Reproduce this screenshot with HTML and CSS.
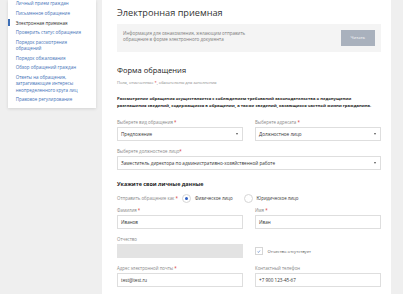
FILE: index.html
```html
<!DOCTYPE html>
<html lang="ru">
<head>
<meta charset="utf-8">
<title>Электронная приемная</title>
<link rel="stylesheet" href="styles.css">
</head>
<body>
<div class="page">
  <aside class="sidebar">
    <ul class="nav">
      <li class="nav-item"><a class="nav-link">Личный прием граждан</a></li>
      <li class="nav-item"><a class="nav-link">Письменное обращение</a></li>
      <li class="nav-item active"><a class="nav-link">Электронная приемная</a></li>
      <li class="nav-item"><a class="nav-link">Проверить статус обращения</a></li>
      <li class="nav-item"><a class="nav-link">Порядок рассмотрения<br>обращений</a></li>
      <li class="nav-item"><a class="nav-link">Порядок обжалования</a></li>
      <li class="nav-item"><a class="nav-link">Обзор обращений граждан</a></li>
      <li class="nav-item"><a class="nav-link">Ответы на обращения,<br>затрагивающие интересы<br>неопределенного круга лиц</a></li>
      <li class="nav-item"><a class="nav-link">Правовое регулирование</a></li>
    </ul>
  </aside>
  <main class="main">
    <h1 class="title">Электронная приемная</h1>
    <div class="info">
      <p class="info-text">Информация для ознакомления, желающим отправить<br>обращение в форме электронного документа</p>
      <button class="btn">Читать</button>
    </div>
    <h2 class="form-title">Форма обращения</h2>
    <p class="note">Поля, отмеченные <span class="req">*</span>, обязательны для заполнения</p>
    <p class="lead">Рассмотрение обращения осуществляется с соблюдением требований законодательства о недопущении<br>разглашения сведений, содержащихся в обращении, а также сведений, касающихся частной жизни гражданина.</p>

    <div class="grid">
      <div class="field">
        <div class="label">Выберете вид обращения <span class="req">*</span></div>
        <div class="control select">Предложение<span class="arrow"></span></div>
      </div>
      <div class="field">
        <div class="label">Выберете адресата <span class="req">*</span></div>
        <div class="control select">Должностное лицо<span class="arrow"></span></div>
      </div>
      <div class="field wide">
        <div class="label">Выберете должностное лицо<span class="req">*</span></div>
        <div class="control select">Заместитель директора по административно-хозяйственной работе<span class="arrow"></span></div>
      </div>
    </div>

    <h3 class="section">Укажите свои личные данные</h3>
    <div class="radio-row">
      <span class="label-inline">Отправить обращение как <span class="req">*</span></span>
      <span class="radio checked"></span><span class="radio-text">Физическое лицо</span>
      <span class="radio"></span><span class="radio-text">Юридическое лицо</span>
    </div>

    <div class="grid personal">
      <div class="field">
        <div class="label">Фамилия <span class="req">*</span></div>
        <div class="control">Иванов</div>
      </div>
      <div class="field">
        <div class="label">Имя <span class="req">*</span></div>
        <div class="control">Иван</div>
      </div>
      <div class="field">
        <div class="label">Отчество</div>
        <div class="control disabled"></div>
      </div>
      <div class="field check-field">
        <span class="checkbox"><svg viewBox="0 0 8 8" width="8" height="8"><path d="M2.3 4.2 L3.5 5.4 L5.8 2.6" fill="none" stroke="#3d6fc0" stroke-width="0.9"/></svg></span>
        <span class="check-text">Отчество отсутствует</span>
      </div>
      <div class="field">
        <div class="label">Адрес электронной почты <span class="req">*</span></div>
        <div class="control">test@test.ru</div>
      </div>
      <div class="field">
        <div class="label">Контактный телефон</div>
        <div class="control">+7 900 123-45-67</div>
      </div>
    </div>
  </main>
</div>
</body>
</html>
```

FILE: styles.css
```css
* { box-sizing: border-box; }

html, body {
  margin: 0;
  padding: 0;
  background: #efefef;
  font-family: "Open Sans", "Noto Sans", sans-serif;
  color: #333;
  overflow: hidden;
}

.page {
  display: flex;
  align-items: flex-start;
  padding-left: 8px;
  padding-right: 12px;
  height: 294px;
}

.sidebar {
  width: 88px;
  flex: none;
  background: #fff;
  box-shadow: 0 1px 3px rgba(0,0,0,0.12);
  padding: 0 0 4px;
}

.nav {
  list-style: none;
  margin: -1.2px 0 0;
  padding: 0;
}

.nav-item {
  padding: 1.15px 0;
}

.nav-link {
  display: block;
  font-size: 4.5px;
  line-height: 6.4px;
  padding: 0.45px 0 0.45px 5.7px;
  border-left: 2px solid transparent;
  color: #3e6fb6;
  white-space: nowrap;
}

.nav-item.active .nav-link {
  color: #2b2b2b;
  border-left-color: #3e6fb6;
}

.main {
  flex: 1;
  margin-left: 6px;
  background: #fff;
  height: 294px;
  padding: 7px 10px 0 15px;
}

.title {
  margin: 0 0 4.7px;
  font-size: 9.2px;
  line-height: 12px;
  font-weight: 400;
  color: #333;
}

.info {
  display: flex;
  justify-content: space-between;
  align-items: flex-start;
  background: #f4f4f4;
  padding: 6px;
  height: 28.5px;
}

.info-text {
  margin: 0;
  font-size: 4.5px;
  line-height: 6.7px;
  color: #7a7a7a;
}

.btn {
  width: 34.5px;
  height: 16px;
  border: 0;
  padding: 0;
  background: #a9b1bd;
  color: #fff;
  font-family: inherit;
  font-size: 4.2px;
}

.form-title {
  margin: 13px 0 0;
  font-size: 7.5px;
  line-height: 10px;
  font-weight: 400;
  color: #222;
}

.note {
  margin: 4.7px 0 0;
  font-size: 4px;
  line-height: 6px;
  color: #888;
}

.req { color: #d9322f; }

.lead {
  margin: 10.4px 0 0;
  font-size: 4.2px;
  line-height: 6.4px;
  font-weight: 700;
  color: #222;
  white-space: nowrap;
}

.grid {
  display: grid;
  grid-template-columns: 126px 126px;
  column-gap: 12px;
  row-gap: 7px;
  margin-top: 10.4px;
}

.grid.personal { margin-top: 3.7px; }

.field.wide { grid-column: 1 / span 2; }

.label {
  font-size: 4.4px;
  line-height: 6px;
  color: #888;
  margin-bottom: 2px;
  white-space: nowrap;
}

.control {
  height: 14px;
  border: 1px solid #dedede;
  background: #fff;
  font-size: 4.6px;
  line-height: 12px;
  padding: 0 3px;
  color: #333;
  white-space: nowrap;
  overflow: hidden;
}

.control.disabled {
  background: #e3e3e3;
  border-color: #e3e3e3;
}

.select {
  display: flex;
  justify-content: space-between;
  align-items: center;
  padding-right: 4px;
}

.arrow {
  width: 0;
  height: 0;
  border-left: 1.5px solid transparent;
  border-right: 1.5px solid transparent;
  border-top: 2px solid #555;
  flex: none;
}

.section {
  margin: 9.7px 0 0;
  font-size: 5.4px;
  line-height: 8px;
  font-weight: 700;
  color: #222;
}

.radio-row {
  display: flex;
  align-items: center;
  height: 10px;
  margin-top: 5.3px;
}

.label-inline {
  font-size: 4.4px;
  color: #888;
  margin-right: 4px;
}

.radio {
  width: 9px;
  height: 9px;
  border-radius: 50%;
  border: 1px solid #d6d6d6;
  background: #fff;
  display: flex;
  align-items: center;
  justify-content: center;
  flex: none;
}

.radio.checked::after {
  content: "";
  width: 3px;
  height: 3px;
  border-radius: 50%;
  background: #2f5fc4;
}

.radio-text {
  font-size: 4.4px;
  color: #333;
  margin-left: 4px;
  margin-right: 11px;
}

.check-field {
  display: flex;
  align-items: center;
  padding-top: 8px;
}

.checkbox {
  width: 7.5px;
  height: 7.5px;
  border: 1px solid #d6d6d6;
  display: flex;
  align-items: center;
  justify-content: center;
  background: #fff;
}

.checkbox svg { display: block; width: 7px; height: 7px; }

.check-text {
  font-size: 4.2px;
  color: #555;
  margin-left: 5px;
}
```
